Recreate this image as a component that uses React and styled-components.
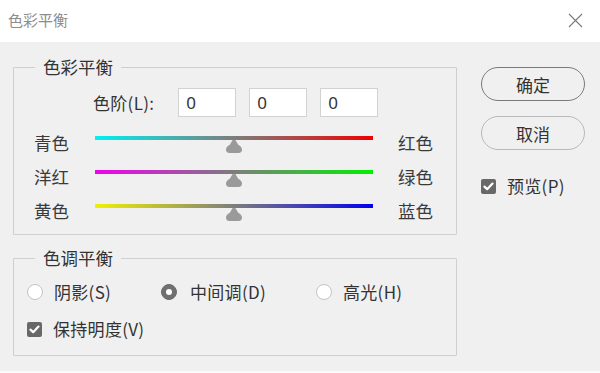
import React, { useState } from 'react';
import styled, { createGlobalStyle } from 'styled-components';

const GlobalStyle = createGlobalStyle`
  html, body {
    margin: 0;
    padding: 0;
    background: #f0f0f0;
  }
  body {
    font-family: "Noto Sans CJK SC", "Noto Sans", "Liberation Sans", sans-serif;
    color: #333;
  }
`;

const Window = styled.div`
  width: 600px;
  height: 373px;
  display: flex;
  flex-direction: column;
  background: #f0f0f0;
  box-sizing: border-box;
  border-bottom: 2px solid #fafafa;
  overflow: hidden;
`;

const TitleBar = styled.div`
  height: 42px;
  flex: none;
  background: #fff;
  display: flex;
  align-items: center;
  justify-content: space-between;
  padding: 0 17px 0 8px;
`;

const TitleText = styled.div`
  font-size: 15px;
  color: #8c8c8c;
  line-height: 20px;
  margin-top: -2px;
`;

const CloseIcon = styled.svg`
  width: 15px;
  height: 15px;
  margin-top: -2px;
`;

const Body = styled.div`
  flex: 1;
  display: flex;
  gap: 24px;
  padding: 13px 15px 0 13px;
`;

const LeftColumn = styled.div`
  width: 444px;
  display: flex;
  flex-direction: column;
  gap: 11px;
`;

const Group = styled.fieldset`
  margin: 0;
  padding: 0 0 ${({ $bottom }) => $bottom}px 0;
  min-width: 0;
  border: 1px solid #cfcfcf;
  border-radius: 1px;
`;

const Legend = styled.legend`
  margin-left: 21px;
  padding: 0 8px;
  font-size: 17.5px;
  line-height: 24px;
  color: #333;
`;

const LevelsRow = styled.div`
  display: flex;
  align-items: center;
  margin: 9px 0 0 79px;
  gap: 13px;
`;

const LevelsLabel = styled.span`
  font-size: 17px;
  line-height: 24px;
  margin-right: 11px;
  letter-spacing: 0.3px;
`;

const LevelInput = styled.input`
  width: 58px;
  height: 29px;
  box-sizing: border-box;
  border: 1px solid #d2d2d2;
  background: #fff;
  padding: 0 0 0 7px;
  font-family: "Noto Sans", "Liberation Sans", sans-serif;
  font-size: 17px;
  color: #333;
  outline: none;
`;

const Sliders = styled.div`
  display: flex;
  flex-direction: column;
  margin-top: 9px;
  padding-left: 20px;
`;

const SliderRow = styled.div`
  display: grid;
  grid-template-columns: 36px 278px 36px;
  column-gap: 25px;
  height: 34px;
  align-items: center;
`;

const SideLabel = styled.span`
  font-size: 17.5px;
  line-height: 24px;
  white-space: nowrap;
  color: #3a3a3a;
`;

const TrackArea = styled.div`
  align-self: start;
  display: flex;
  flex-direction: column;
  align-items: center;
  padding-top: 10px;
`;

const Track = styled.div`
  width: 100%;
  height: 4px;
  background: linear-gradient(to right, ${({ $from }) => $from}, #7d7d7d 50%, ${({ $to }) => $to});
`;

const Thumb = styled.svg`
  width: 16px;
  height: 13px;
  display: block;
`;

const RadioRow = styled.div`
  display: grid;
  grid-template-columns: 134px 155px auto;
  align-items: center;
  height: 24px;
  margin: 10px 0 0 13px;
`;

const Option = styled.label`
  display: flex;
  align-items: center;
  gap: ${({ $gap }) => $gap}px;
  font-size: 17px;
  line-height: 24px;
  color: #333;
  white-space: nowrap;
  letter-spacing: 0.3px;
`;

const RadioDot = styled.span`
  width: 16px;
  height: 16px;
  box-sizing: border-box;
  border-radius: 50%;
  flex: none;
  display: flex;
  align-items: center;
  justify-content: center;
  border: 1px solid ${({ $on }) => ($on ? '#6b6b6b' : '#c4c4c4')};
  background: ${({ $on }) => ($on ? '#707070' : '#fff')};

  &::after {
    content: '';
    width: 6px;
    height: 6px;
    border-radius: 50%;
    background: #fff;
    display: ${({ $on }) => ($on ? 'block' : 'none')};
  }
`;

const CheckRow = styled.div`
  display: flex;
  height: 24px;
  align-items: center;
  margin: ${({ $margin }) => $margin};
`;

const CheckBox = styled.span`
  width: 15px;
  height: 15px;
  border-radius: 2px;
  background: #686868;
  flex: none;
  display: flex;
  align-items: center;
  justify-content: center;
`;

const RightColumn = styled.div`
  width: 104px;
  display: flex;
  flex-direction: column;
  padding-top: 12px;
`;

const Button = styled.button`
  width: 104px;
  height: 34px;
  border-radius: 17px;
  border: 1px solid ${({ $primary }) => ($primary ? '#7a7a7a' : '#b9b9b9')};
  background: #f0f0f0;
  font-family: inherit;
  font-size: 17px;
  color: #333;
  padding: 0;
  margin-bottom: 15px;
  cursor: pointer;
`;

const Check = () => (
  <svg width="11" height="9" viewBox="0 0 11 9">
    <path d="M1.5 4.6 L4.2 7.2 L9.5 1.6" fill="none" stroke="#fff" strokeWidth="2.2" strokeLinecap="round" strokeLinejoin="round" />
  </svg>
);

const ThumbShape = () => (
  <Thumb viewBox="0 0 16 13">
    <path d="M6.6 0 L9.4 0 L12.2 4.8 Q16 6.8 16 9.6 Q16 13 12.6 13 L3.4 13 Q0 13 0 9.6 Q0 6.8 3.8 4.8 Z" fill="#9a9a9a" />
  </Thumb>
);

const sliders = [
  { left: '青色', right: '红色', from: '#00f0f0', to: '#f00000' },
  { left: '洋红', right: '绿色', from: '#f000f0', to: '#00f000' },
  { left: '黄色', right: '蓝色', from: '#f0f000', to: '#0000f0' },
];

const tones = [
  { label: '阴影(S)', gap: 11 },
  { label: '中间调(D)', gap: 13 },
  { label: '高光(H)', gap: 11 },
];

export default function App() {
  const [levels, setLevels] = useState(['0', '0', '0']);
  const [tone, setTone] = useState(1);

  return (
    <Window>
      <GlobalStyle />
      <TitleBar>
        <TitleText>色彩平衡</TitleText>
        <CloseIcon viewBox="0 0 15 15">
          <path d="M1 1 L14 14 M14 1 L1 14" stroke="#7a7a7a" strokeWidth="1.1" />
        </CloseIcon>
      </TitleBar>
      <Body>
        <LeftColumn>
          <Group $bottom={6}>
            <Legend>色彩平衡</Legend>
            <LevelsRow>
              <LevelsLabel>色阶(L):</LevelsLabel>
              {levels.map((v, i) => (
                <LevelInput
                  key={i}
                  value={v}
                  onChange={(e) => setLevels(levels.map((x, j) => (j === i ? e.target.value : x)))}
                />
              ))}
            </LevelsRow>
            <Sliders>
              {sliders.map((s) => (
                <SliderRow key={s.left}>
                  <SideLabel>{s.left}</SideLabel>
                  <TrackArea>
                    <Track $from={s.from} $to={s.to} />
                    <ThumbShape />
                  </TrackArea>
                  <SideLabel>{s.right}</SideLabel>
                </SliderRow>
              ))}
            </Sliders>
          </Group>
          <Group $bottom={14}>
            <Legend>色调平衡</Legend>
            <RadioRow>
              {tones.map((t, i) => (
                <Option key={t.label} $gap={t.gap} onClick={() => setTone(i)}>
                  <RadioDot $on={tone === i} />
                  {t.label}
                </Option>
              ))}
            </RadioRow>
            <CheckRow $margin="13px 0 0 13px">
              <Option $gap={11}>
                <CheckBox><Check /></CheckBox>
                保持明度(V)
              </Option>
            </CheckRow>
          </Group>
        </LeftColumn>
        <RightColumn>
          <Button $primary>确定</Button>
          <Button>取消</Button>
          <CheckRow $margin="9px 0 0 0">
            <Option $gap={11}>
              <CheckBox><Check /></CheckBox>
              预览(P)
            </Option>
          </CheckRow>
        </RightColumn>
      </Body>
    </Window>
  );
}
